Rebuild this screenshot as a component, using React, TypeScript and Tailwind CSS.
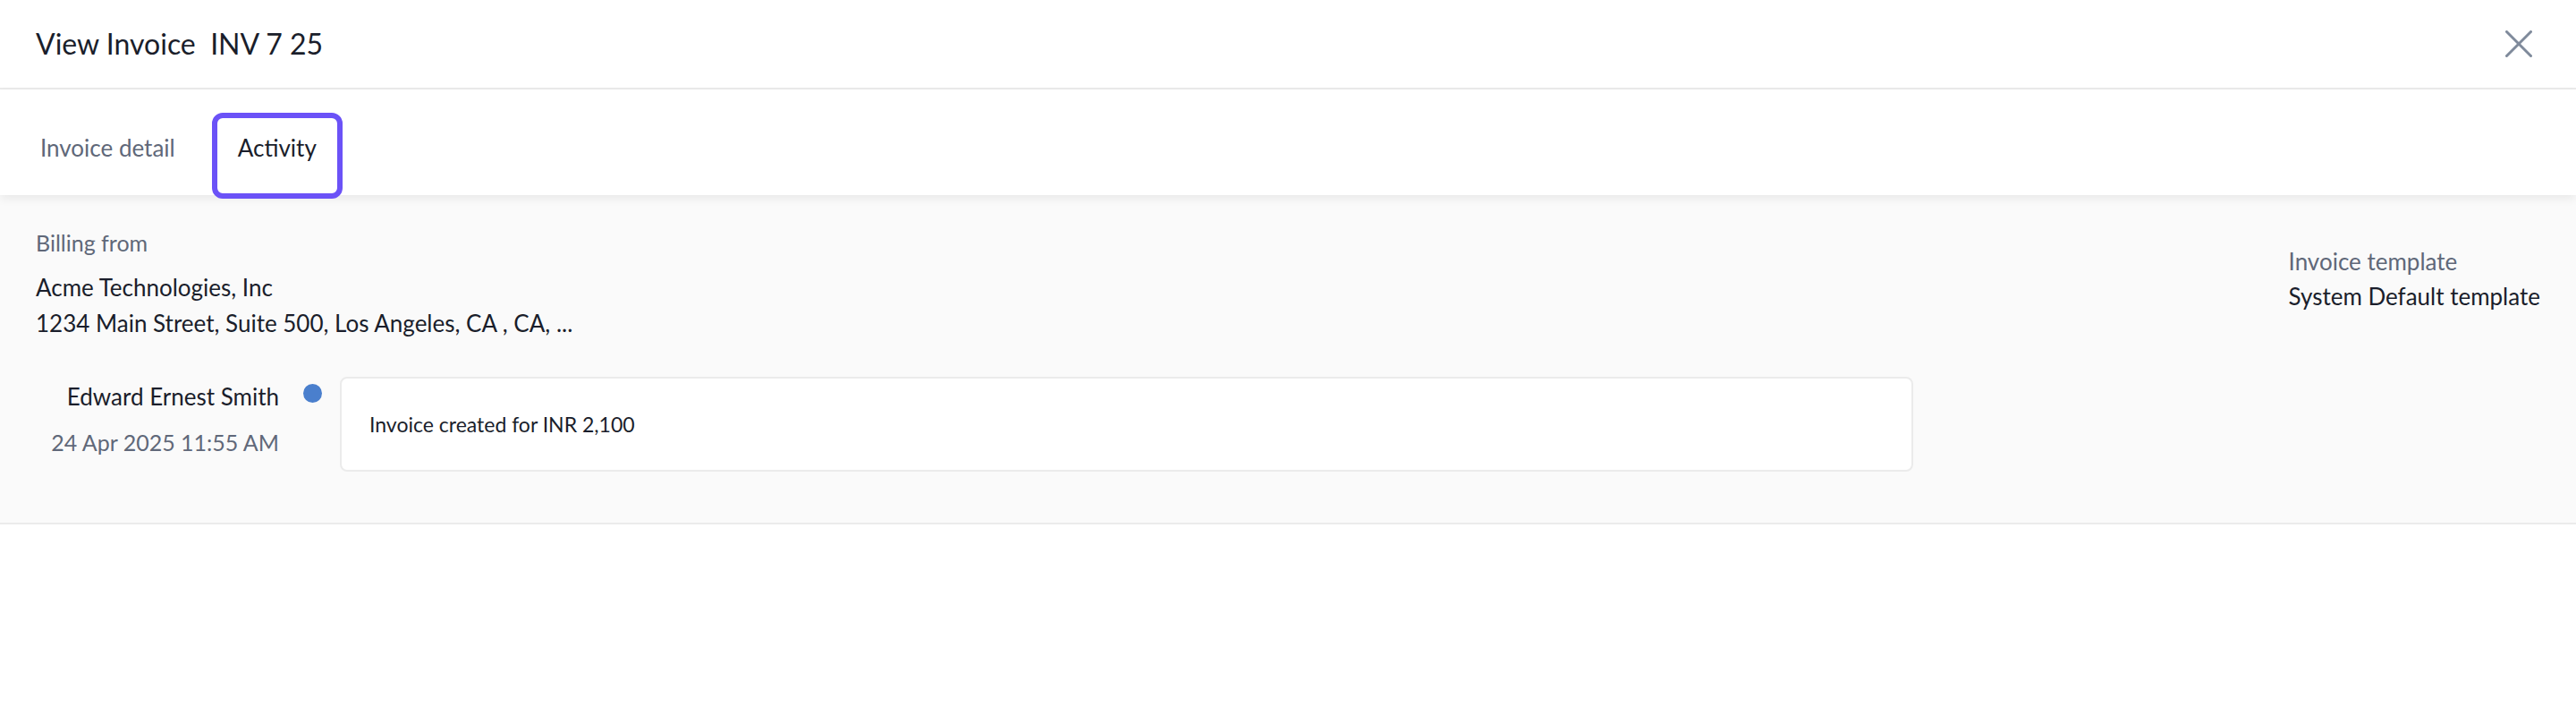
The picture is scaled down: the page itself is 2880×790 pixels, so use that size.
const font = "font-['Lato','Liberation_Sans',sans-serif]"

const tabs = [
  { label: "Invoice detail", active: false },
  { label: "Activity", active: true },
]

export default function App() {
  return (
    <div className={`${font} w-full min-h-[790px] bg-white text-[#1a1e2b]`}>
      {/* Header */}
      <div className="h-[100px] flex items-center justify-between pl-[40px] pr-[44px] border-b-2 border-[#ebebeb]">
        <h1 className="text-[32px] leading-none whitespace-pre text-[#1a1e2b]">View Invoice  INV 7 25</h1>
        <button className="w-[40px] h-[40px] flex items-center justify-center">
          <svg width="30" height="30" viewBox="0 0 30 30" fill="none" stroke="#7f8a9b" strokeWidth="3" strokeLinecap="round">
            <path d="M1.5 1.5 28.5 28.5" />
            <path d="M28.5 1.5 1.5 28.5" />
          </svg>
        </button>
      </div>

      {/* Tabs */}
      <div className="relative z-10 h-[118px] bg-white shadow-[0_4px_10px_rgba(0,0,0,0.07)] flex items-start gap-[9px] pl-[13px] pt-[26px]">
        {tabs.map((tab) => (
          <button
            key={tab.label}
            className={`h-[96px] pt-[20px] flex items-start border-[6px] rounded-[12px] text-[26px] leading-none ${
              tab.active ? "px-[23px] border-[#6b52f7] text-[#1a1e2b]" : "px-[26px] border-transparent text-[#606879]"
            }`}
          >
            {tab.label}
          </button>
        ))}
      </div>

      {/* Content */}
      <div className="bg-[#fafafa] border-b-2 border-[#ebebeb] flex justify-between px-[40px] pb-[57px]">
        <div className="flex-1 pt-[41px]">
          <div className="text-[25px] leading-none text-[#606879]">Billing from</div>
          <div className="mt-[24px] text-[26px] leading-none">Acme Technologies, Inc</div>
          <div className="mt-[14px] text-[26px] leading-none">1234 Main Street, Suite 500, Los Angeles, CA , CA, ...</div>

          {/* Activity entry */}
          <div className="mt-[47px] flex items-start">
            <div className="w-[272px] text-right">
              <div className="mt-[9px] text-[26px] leading-none">Edward Ernest Smith</div>
              <div className="mt-[26px] text-[25px] leading-none text-[#606879]">24 Apr 2025 11:55 AM</div>
            </div>
            <div className="ml-[27px] mt-[8px] w-[21px] h-[21px] rounded-full bg-[#4a7fcd]" />
            <div className="ml-[20px] w-[1759px] h-[106px] bg-white border-2 border-[#ebebeb] rounded-[8px] flex items-center pl-[31px]">
              <span className="text-[23px] leading-none">Invoice created for INR 2,100</span>
            </div>
          </div>
        </div>

        <div className="shrink-0 pt-[61px]">
          <div className="text-[26px] leading-none text-[#606879]">Invoice template</div>
          <div className="mt-[13px] text-[26px] leading-none">System Default template</div>
        </div>
      </div>
    </div>
  )
}
